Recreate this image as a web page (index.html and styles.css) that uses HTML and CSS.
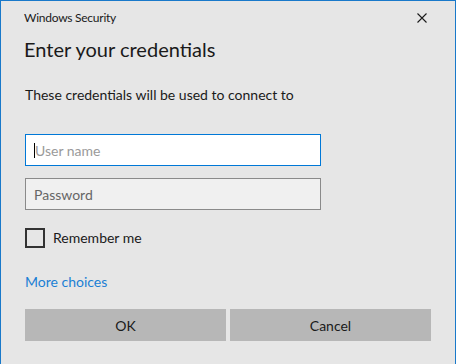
FILE: index.html
```html
<!DOCTYPE html>
<html>

<head>
    <title>Windows Security</title>
    <link rel="stylesheet" href="styles.css">
</head>

<body>
    <section class="window">
        <div class="title-bar">
            <span class="title">Windows Security</span>
            <button class="close" aria-label="Close">
                <svg width="10" height="10" viewBox="0 0 10 10">
                    <path d="M0.5 0.5 L9.5 9.5 M9.5 0.5 L0.5 9.5" stroke="#1a1a1a" stroke-width="1.1" fill="none" />
                </svg>
            </button>
        </div>
        <h1 class="heading">Enter your credentials</h1>
        <p class="desc">These credentials will be used to connect to</p>
        <div class="field focused"><span class="caret"></span><span class="placeholder">User name</span></div>
        <div class="field"><span class="placeholder dark">Password</span></div>
        <label class="remember">
            <span class="checkbox"></span>
            <span>Remember me</span>
        </label>
        <a class="more" href="#">More choices</a>
        <div class="actions">
            <button class="btn">OK</button>
            <button class="btn">Cancel</button>
        </div>
    </section>
</body>

</html>
```

FILE: styles.css
```css
* {
    box-sizing: border-box;
}

html,
body {
    margin: 0;
    height: 100%;
}

body {
    font-family: Lato, "Noto Sans", sans-serif;
    color: #1a1a1a;
    background: #e6e6e6;
}

.window {
    height: 364px;
    border: 1px solid #1979ca;
    border-bottom: none;
    background: #e6e6e6;
    padding: 0 24px 0 24px;
    display: flex;
    flex-direction: column;
}

.title-bar {
    height: 32px;
    display: flex;
    align-items: center;
    justify-content: space-between;
    padding-top: 1px;
}

.title {
    font-size: 12px;
    letter-spacing: -0.25px;
    margin-left: -1px;
}

.close {
    border: none;
    background: none;
    padding: 0;
    margin-right: 4px;
    width: 10px;
    height: 10px;
    display: flex;
}

.heading {
    font-size: 20px;
    font-weight: normal;
    margin: 2px 0 0 -1px;
    line-height: 28px;
}

.desc {
    font-size: 14px;
    margin: 22px 0 0 0;
    line-height: 20px;
}

.field {
    width: 296px;
    height: 32px;
    border: 1px solid #8a8a8a;
    background: #f0f0f0;
    display: flex;
    align-items: center;
    padding-left: 8px;
    font-size: 14px;
    margin-top: 12px;
}

.field.focused {
    margin-top: 29px;
    background: #fff;
    border-color: #0078d7;
}

.caret {
    width: 1px;
    height: 15px;
    background: #000;
}

.placeholder {
    color: #9a9a9a;
}

.placeholder.dark {
    color: #666;
}

.remember {
    display: flex;
    align-items: center;
    gap: 8px;
    margin-top: 18px;
    font-size: 14px;
    line-height: 20px;
}

.checkbox {
    width: 20px;
    height: 20px;
    border: 2px solid #333;
}

.more {
    font-size: 14px;
    line-height: 20px;
    color: #1a7fd4;
    text-decoration: none;
    margin-top: 24px;
    align-self: flex-start;
}

.actions {
    display: flex;
    gap: 4px;
    margin-top: 17px;
}

.btn {
    width: 201px;
    height: 32px;
    border: none;
    background: #b7b7b7;
    color: #1a1a1a;
    font-family: inherit;
    font-size: 14px;
}
```
